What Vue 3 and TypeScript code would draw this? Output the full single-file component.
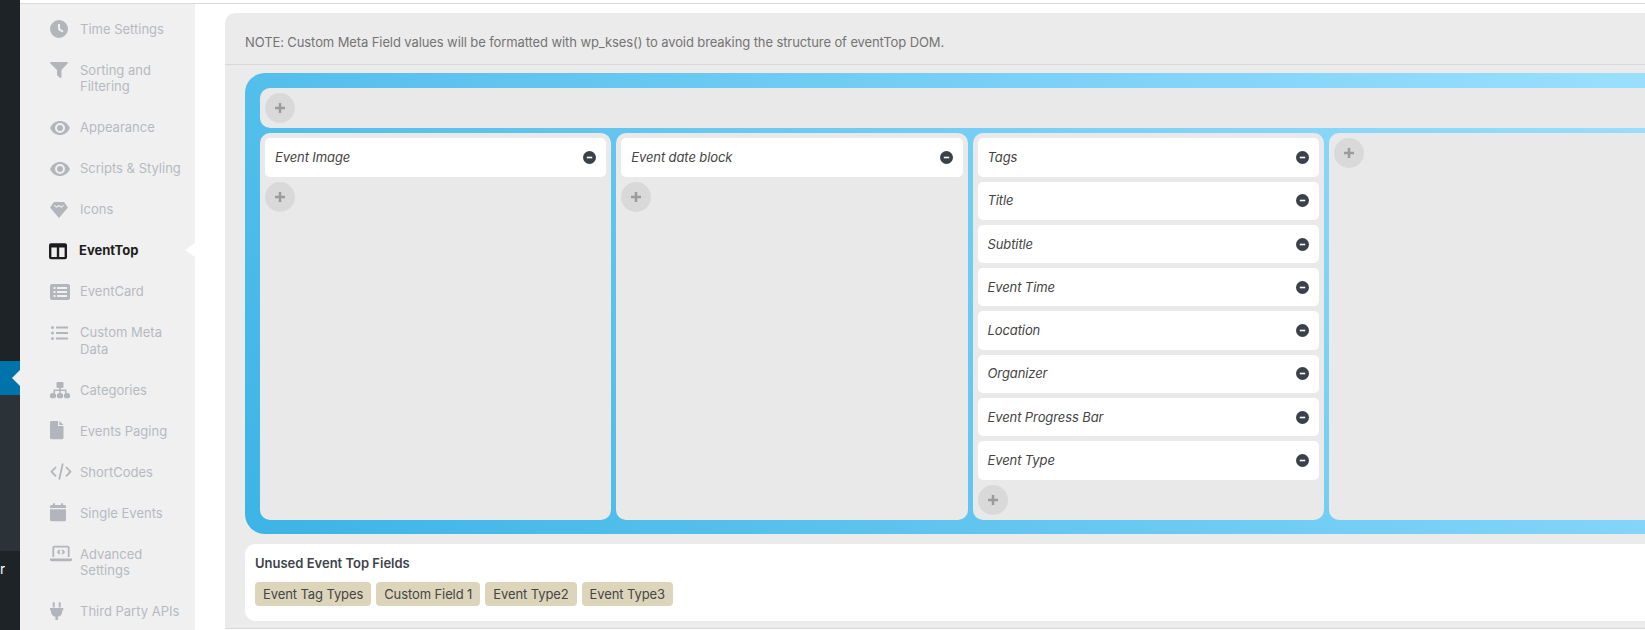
<script setup lang="ts">
interface NavItem {
  label: string
  d?: string
  s?: string
  active?: boolean
}

const eye =
  'M0 10C2 5.500 6 3 10 3s8 2.500 10 7c-2 4.500-6 7-10 7S2 14.500 0 10zM10 5a5 5 0 1 0 0 10a5 5 0 0 0 0-10zM10 7a3 3 0 1 1 0 6a3 3 0 0 1 0-6z'

const nav: NavItem[] = [
  { label: 'Time Settings', d: 'M9 1a9 9 0 1 0 0 18a9 9 0 0 0 0-18zM8 5h2v4.600l3.600 2.400-1.100 1.600L8 10.800z' },
  { label: 'Sorting and Filtering', d: 'M.8 2h16.400c.7 0 1 .8.6 1.300L11.500 10v7c0 .8-.9 1.200-1.500.7l-3-2.500V10L.2 3.300C-.2 2.800.1 2 .8 2z' },
  { label: 'Appearance', d: eye },
  { label: 'Scripts & Styling', d: eye },
  { label: 'Icons', d: 'M4 2h10l4 5.500-9 10.500L0 7.500zM5 5l1.500 1.500L9 5l2.500 1.500L13 5l1 .6-2.300 2.200L9 6.600 6.300 7.800 4 5.600z' },
  {
    label: 'EventTop',
    active: true,
    d: 'M1 2.300h14a2 2 0 0 1 2 2v12a2 2 0 0 1-2 2H1a2 2 0 0 1-2-2v-12a2 2 0 0 1 2-2zM1.400 6.500v9.400h5.400V6.500zM9.200 6.500v9.400h5.400V6.500z',
  },
  {
    label: 'EventCard',
    d: 'M2 2h16a2 2 0 0 1 2 2v12a2 2 0 0 1-2 2H2a2 2 0 0 1-2-2V4a2 2 0 0 1 2-2zM3.500 5v2h2V5zM7 5v2h10V5zM3.500 9v2h2V9zM7 9v2h10V9zM3.500 13v2h2v-2zM7 13v2h10v-2z',
  },
  {
    label: 'Custom Meta Data',
    d: 'M2.500 3a1.500 1.500 0 1 1 0 3a1.500 1.500 0 0 1 0-3zM6 3.400h12v2.200H6zM2.500 8.500a1.500 1.500 0 1 1 0 3a1.500 1.500 0 0 1 0-3zM6 8.900h12v2.200H6zM2.500 14a1.500 1.500 0 1 1 0 3a1.500 1.500 0 0 1 0-3zM6 14.400h12v2.200H6z',
  },
  {
    label: 'Categories',
    d: 'M7.500 2h5a1 1 0 0 1 1 1v4a1 1 0 0 1-1 1h-1.700v1.600h5.700v3.400H15v-2h-4.200v2H9.200v-2H5v2H3.500V9.600h5.700V8H7.500a1 1 0 0 1-1-1V3a1 1 0 0 1 1-1zM2.500 13h1a2.650 2.650 0 0 1 0 5.300h-1a2.650 2.650 0 0 1 0-5.300zM9.500 13h1a2.650 2.650 0 0 1 0 5.300h-1a2.650 2.650 0 0 1 0-5.300zM16.500 13h1a2.650 2.650 0 0 1 0 5.300h-1a2.650 2.650 0 0 1 0-5.300z',
  },
  {
    label: 'Events Paging',
    d: 'M1.500 0H8v5h5.500v11.800c0 .8-.7 1.500-1.500 1.500H1.500C.7 18.300 0 17.600 0 16.800V1.500C0 .7.7 0 1.500 0zM9.300 0l4.200 4H9.300z',
  },
  { label: 'ShortCodes', s: 'M6 5L1.500 9.700 6 14.400M16 5l4.500 4.700L16 14.400M12.800 1.500L9.200 17.500' },
  {
    label: 'Single Events',
    d: 'M0 6.300h16v10.500c0 .8-.7 1.500-1.500 1.500h-13C.7 18.300 0 17.600 0 16.800zM1.500 2H3V.3h2V2h6V.3h2V2h1.500C15.300 2 16 2.700 16 3.500V5H0V3.500C0 2.700.7 2 1.500 2z',
  },
  {
    label: 'Advanced Settings',
    d: 'M0 14.500h22v1.300c0 .8-.7 1.400-1.500 1.400h-19C.7 17.200 0 16.600 0 15.800z',
    s: 'M3.300 13V3.700c0-.6.400-1 1-1h13.400c.6 0 1 .4 1 1V13M9.800 6L8 8l1.800 2M12.200 6L14 8l-1.800 2',
  },
  {
    label: 'Third Party APIs',
    d: 'M2.700.3h2v5.200h-2zM8.700.3h2v5.200h-2zM0 6h13.300v2.300h-1v1.500c0 2.600-1.900 4.700-4.400 5V18H5.400v-3.200C2.900 14.500 1 12.400 1 9.800V8.300H0z',
  },
]

const columns: string[][] = [
  ['Event Image'],
  ['Event date block'],
  ['Tags', 'Title', 'Subtitle', 'Event Time', 'Location', 'Organizer', 'Event Progress Bar', 'Event Type'],
  [],
]

const unused = ['Event Tag Types', 'Custom Field 1', 'Event Type2', 'Event Type3']
</script>

<template>
  <div class="page">
    <aside class="wpbar">
      <div class="wp-top"></div>
      <div class="wp-current"><span class="wp-caret"></span></div>
      <div class="wp-sub"></div>
      <div class="wp-rest"><span class="wp-label">r</span></div>
    </aside>

    <div class="workspace">
      <div class="topline"></div>
      <div class="content">
        <nav class="settings-nav">
          <a v-for="item in nav" :key="item.label" class="nav-item" :class="{ active: item.active }">
            <svg class="nav-icon" viewBox="0 0 22 20" width="22" height="20" aria-hidden="true">
              <path v-if="item.d" :d="item.d" fill="currentColor" fill-rule="evenodd" />
              <path
                v-if="item.s"
                :d="item.s"
                fill="none"
                stroke="currentColor"
                stroke-width="1.800"
              />
            </svg>
            <span class="nav-label">{{ item.label }}</span>
          </a>
        </nav>

        <main class="panel">
          <header class="panel-note">
            NOTE: Custom Meta Field values will be formatted with wp_kses() to avoid breaking the structure of eventTop DOM.
          </header>
          <div class="panel-body">
            <section class="designer">
              <div class="top-row">
                <button class="add" type="button" aria-label="Add">
                  <svg viewBox="0 0 12 12" width="10" height="10"><path d="M4.500 0h3v4.500H12v3H7.500V12h-3V7.500H0v-3h4.500z" fill="currentColor" /></svg>
                </button>
              </div>
              <div class="columns">
                <div v-for="(col, i) in columns" :key="i" class="column">
                  <div v-for="field in col" :key="field" class="field">
                    <span>{{ field }}</span>
                    <svg class="remove" viewBox="0 0 13 13" width="13" height="13" aria-hidden="true">
                      <circle cx="6.500" cy="6.500" r="6.500" fill="#3a4149" />
                      <rect x="3.800" y="5.700" width="5.400" height="1.600" fill="#fff" />
                    </svg>
                  </div>
                  <button class="add" type="button" aria-label="Add">
                    <svg viewBox="0 0 12 12" width="10" height="10"><path d="M4.500 0h3v4.500H12v3H7.500V12h-3V7.500H0v-3h4.500z" fill="currentColor" /></svg>
                  </button>
                </div>
              </div>
            </section>

            <section class="unused">
              <h4 class="unused-title">Unused Event Top Fields</h4>
              <div class="tags">
                <span v-for="tag in unused" :key="tag" class="tag">{{ tag }}</span>
              </div>
            </section>
          </div>
        </main>
      </div>
    </div>
  </div>
</template>

<style>
html,
body {
  margin: 0;
  background: #fff;
  overflow: hidden;
}
</style>

<style scoped>
.page {
  display: flex;
  width: 1645px;
  height: 630px;
  overflow: hidden;
  font-family: Inter, "Liberation Sans", sans-serif;
  font-size: 13px;
  line-height: 17px;
}

.wpbar {
  flex: 0 0 20px;
  width: 20px;
  min-width: 0;
  overflow: hidden;
  display: flex;
  flex-direction: column;
  background: #1d2327;
}
.wp-top {
  height: 361px;
}
.wp-current {
  position: relative;
  height: 34px;
  background: #0073aa;
}
.wp-caret {
  position: absolute;
  right: 0;
  top: 9px;
  border: 8px solid transparent;
  border-left-width: 0;
  border-right-color: #f0f0f1;
}
.wp-sub {
  height: 156px;
  background: #2c3338;
}
.wp-rest {
  flex: 1;
  overflow: hidden;
  width: 5px;
}
.wp-label {
  display: block;
  margin-top: 9px;
  color: #fff;
  font-size: 14px;
  text-align: right;
}

.workspace {
  flex: 1;
  min-width: 0;
  display: flex;
  flex-direction: column;
}
.topline {
  height: 3px;
  flex: none;
  border-bottom: 1px solid #dcdcde;
}
.content {
  flex: 1;
  display: flex;
  min-height: 0;
}

.settings-nav {
  flex: 0 0 175px;
  box-sizing: border-box;
  padding-top: 4.500px;
  background: #f0f0f1;
  overflow: hidden;
}
.nav-item {
  position: relative;
  display: flex;
  align-items: flex-start;
  padding: 12.250px 0 12.250px 30px;
  line-height: 16.500px;
  color: #b6bac0;
}
.nav-icon {
  flex: 0 0 22px;
  margin: -1.750px 8px -1.750px 0;
  overflow: visible;
  color: #b2b6bc;
}
.nav-label {
  width: 106px;
}
.nav-item.active {
  color: #1d1d20;
  font-weight: 700;
}
.nav-item.active .nav-icon {
  color: #1d1d20;
}
.nav-item.active .nav-label {
  margin-left: -1px;
}
.nav-item.active::after {
  content: "";
  position: absolute;
  right: 0;
  top: 13px;
  border: 7.500px solid transparent;
  border-left-width: 0;
  border-right: 10px solid #fff;
}

.panel {
  flex: none;
  width: 1490px;
  height: 616px;
  box-sizing: border-box;
  margin: 9px 0 0 30px;
  background: #ebebeb;
  border-radius: 10px 0 0 0;
  border-bottom: 1px solid #d8d8d8;
  letter-spacing: -0.1px;
}
.panel-note {
  height: 52px;
  box-sizing: border-box;
  padding: 21px 20px 0;
  color: #747474;
  border-bottom: 1px solid #d8d8d8;
}
.panel-body {
  padding: 8px 20px 0;
}

.designer {
  box-sizing: border-box;
  padding: 15px;
  height: 461px;
  border-radius: 20px;
  background: linear-gradient(45deg, #3cb4e5, #9de0ff);
}
.top-row {
  height: 40px;
  box-sizing: border-box;
  padding: 5px;
  background: #e9e9e9;
  border-radius: 10px;
}
.columns {
  display: grid;
  grid-template-columns: repeat(4, 351.250px);
  gap: 5px;
  margin-top: 5px;
  height: 386px;
}
.column {
  display: flex;
  flex-direction: column;
  align-items: flex-start;
  gap: 5px;
  padding: 5.300px 5px 5px;
  background: #e9e9e9;
  border-radius: 10px;
}
.field {
  align-self: stretch;
  display: flex;
  align-items: center;
  justify-content: space-between;
  height: 38.300px;
  padding: 0 10px;
  background: #fff;
  border-radius: 5px;
  color: #444;
  font-style: italic;
}
.add {
  display: flex;
  align-items: center;
  justify-content: center;
  width: 30px;
  height: 30px;
  padding: 0;
  border: 0;
  border-radius: 50%;
  background: #d9d9d9;
  color: #9b9b9b;
}

.unused {
  height: 77px;
  box-sizing: border-box;
  margin-top: 10px;
  padding: 10.500px 10px 0;
  background: #fff;
  border-radius: 10px;
}
.unused-title {
  margin: 0 0 10.500px;
  font-size: 13px;
  line-height: 17px;
  font-weight: 600;
  color: #3f444a;
  letter-spacing: 0;
}
.tags {
  display: flex;
  gap: 5px;
}
.tag {
  height: 24px;
  line-height: 24px;
  padding: 0 8px;
  border-radius: 4px;
  background: #ddd5bb;
  color: #454545;
}
</style>
